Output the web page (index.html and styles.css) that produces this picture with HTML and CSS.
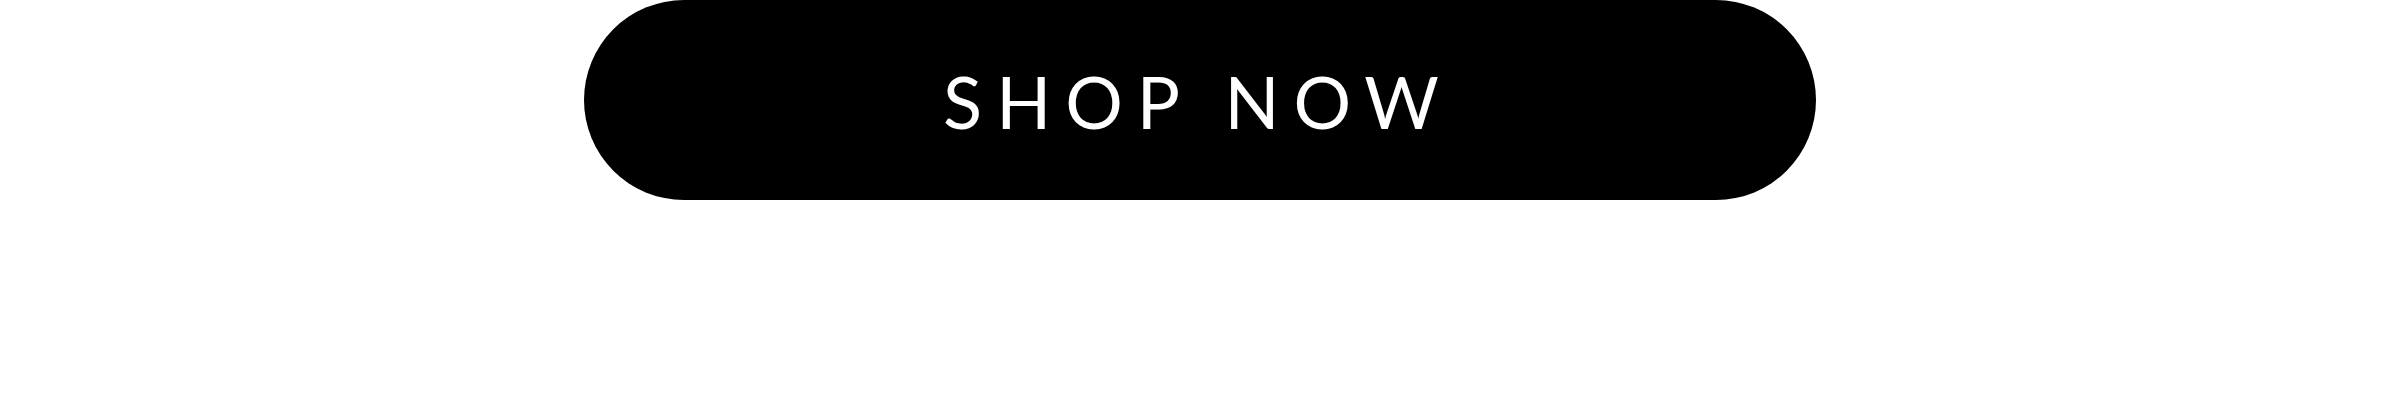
FILE: index.html
```html
<!DOCTYPE html>
<html>
<head>
<title>Shop Now</title>
<link rel="stylesheet" href="styles.css">
</head>
<body>
  <div class="hero">
    <a class="shop-button" href="#">SHOP NOW</a>
  </div>
</body>
</html>
```

FILE: styles.css
```css
body {
  margin: 0;
  background-color: #fff;
  font-family: "Lato", "Noto Sans", sans-serif;
}

.hero {
  display: flex;
  justify-content: center;
}

.shop-button {
  display: flex;
  align-items: center;
  justify-content: center;
  width: 1232px;
  height: 200px;
  border-radius: 100px;
  background-color: #000;
  color: #fff;
  text-decoration: none;
  font-size: 72px;
  font-weight: 400;
  letter-spacing: 14px;
  padding-top: 2px;
  padding-right: 4px;
  box-sizing: border-box;
}
```
